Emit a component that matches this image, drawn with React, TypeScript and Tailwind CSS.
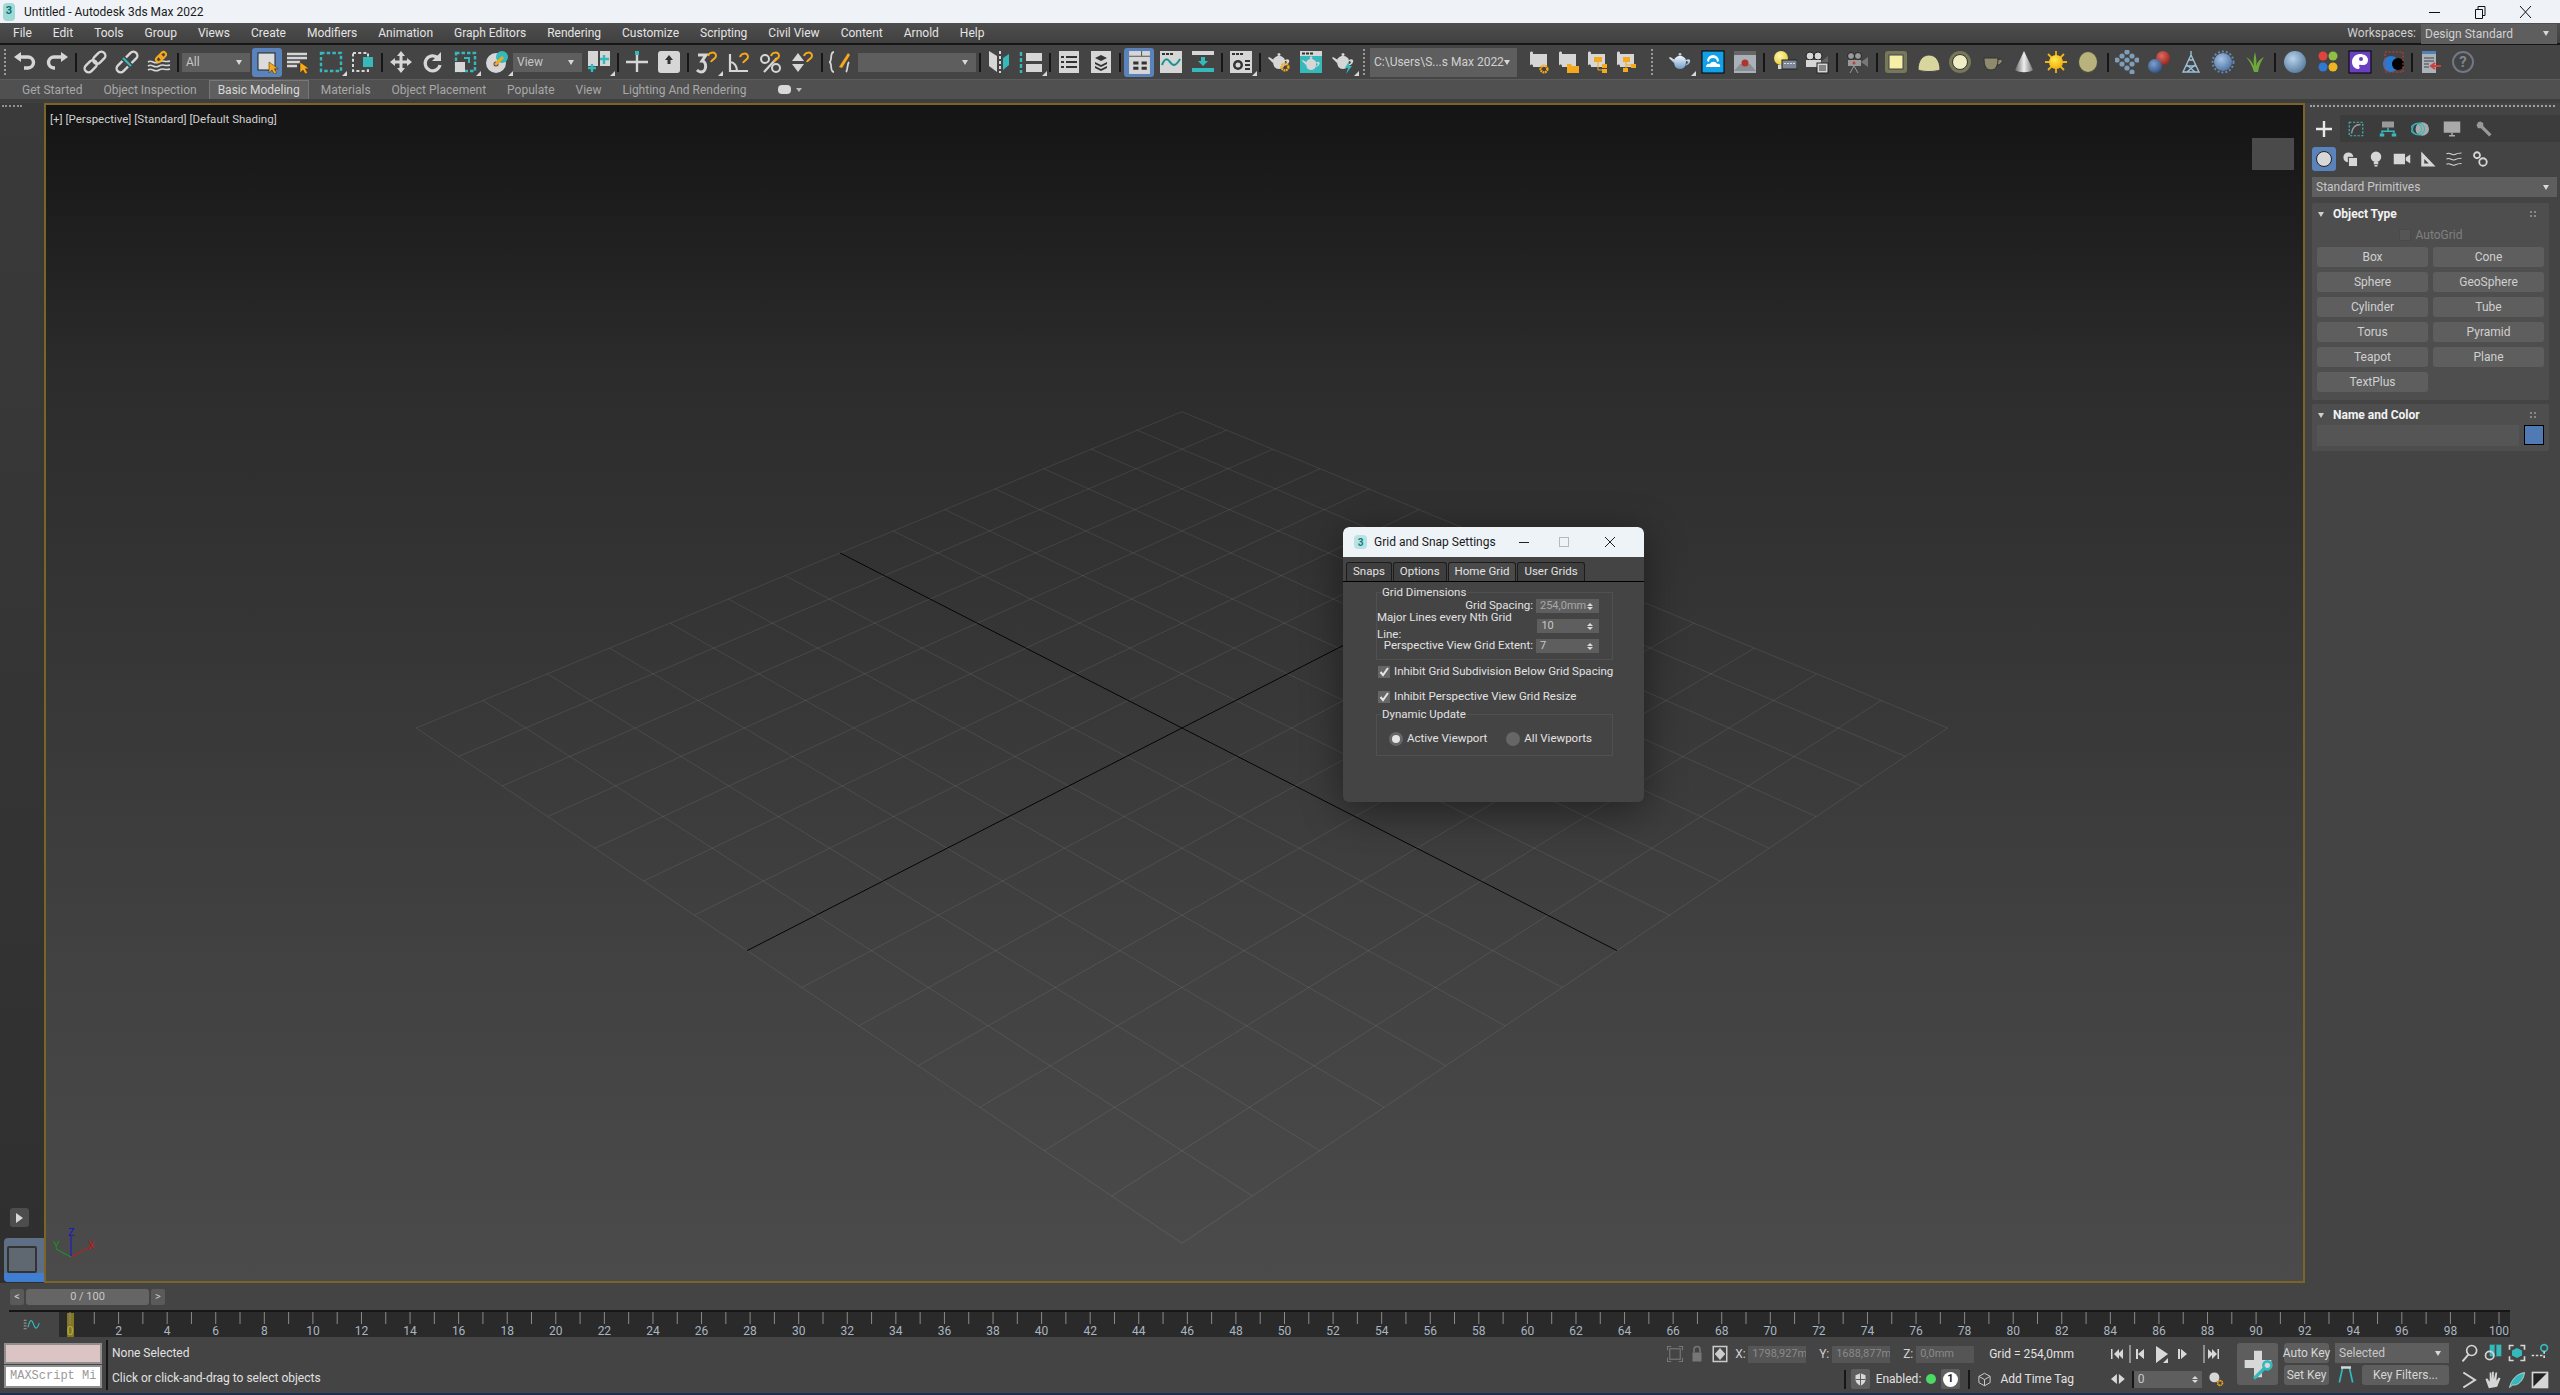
import type { ReactNode } from 'react';

const G = '#d6d6d6';
const T = '#35b9bb';
const A = '#f6a91b';

const menus = ['File', 'Edit', 'Tools', 'Group', 'Views', 'Create', 'Modifiers', 'Animation', 'Graph Editors', 'Rendering', 'Customize', 'Scripting', 'Civil View', 'Content', 'Arnold', 'Help'];
const primitives = ['Box', 'Cone', 'Sphere', 'GeoSphere', 'Cylinder', 'Tube', 'Torus', 'Pyramid', 'Teapot', 'Plane', 'TextPlus'];

// perspective of the home grid, fitted on the corners in the screenshot
function project(u: number, v: number) {
    const a = u - v;
    const b = u + v;
    const w = 1 + 0.0171 * b;
    return { x: 1182 + (54.7 * a) / w, y: 728 - (28 * b) / w };
}

function gridLine(u1: number, v1: number, u2: number, v2: number) {
    const p = project(u1, v1);
    const q = project(u2, v2);
    return { x1: p.x, y1: p.y, x2: q.x, y2: q.y };
}

const steps = Array.from({ length: 15 }, (_, i) => i - 7);

function Ico({ children, size = 24 }: { children: ReactNode; size?: number }) {
    return (
        <svg width={size} height={size} viewBox="0 0 24 24" fill="none" className="block">
            {children}
        </svg>
    );
}

function Slot({ children, flyout, className = 'w-8' }: { children?: ReactNode; flyout?: boolean; className?: string }) {
    return (
        <div className={`relative h-[34px] shrink-0 flex items-center justify-center ${className}`}>
            {children}
            {flyout && <div className="absolute right-0 bottom-[3px] w-0 h-0 border-l-[5px] border-l-transparent border-b-[5px] border-b-[#d8d8d8]" />}
        </div>
    );
}

function Sep({ className = 'w-1.5' }: { className?: string }) {
    return (
        <div className={`h-[34px] shrink-0 flex items-center justify-center ${className}`}>
            <div className="w-0.5 h-[19px] bg-[#161616]" />
        </div>
    );
}

function Dots({ className = 'w-2.5' }: { className?: string }) {
    return (
        <div className={`h-[34px] shrink-0 flex items-center justify-center ${className}`}>
            <div className="h-[26px] border-l-2 border-dotted border-[#9a9a9a]" />
        </div>
    );
}

function Combo({ text, className }: { text: string; className: string }) {
    return (
        <div className={`shrink-0 flex items-center justify-between bg-[#5e5e5e] text-[#c6c6c6] text-[12px] pl-1 pr-2 ${className}`}>
            <span className="whitespace-nowrap">{text}</span>
            <span className="w-0 h-0 border-x-[3px] border-x-transparent border-t-[5px] border-t-[#d8d8d8]" />
        </div>
    );
}

function Cursor() {
    return <path d="M14 12v11l3-3 2.200 4 2.400-1.200-2.200-4h4z" fill={A} stroke="#3a2a00" strokeWidth=".5" />;
}

function Ball({ id, c1, c2, r = 9, cx = 12, cy = 12 }: { id: string; c1: string; c2: string; r?: number; cx?: number; cy?: number }) {
    return (
        <>
            <defs>
                <radialGradient id={id} cx=".4" cy=".35" r=".75">
                    <stop offset="0" stopColor={c1} />
                    <stop offset="1" stopColor={c2} />
                </radialGradient>
            </defs>
            <circle cx={cx} cy={cy} r={r} fill={`url(#${id})`} />
        </>
    );
}

function Chain() {
    return (
        <g stroke={G} strokeWidth="2.400" transform="rotate(-45 12 12)">
            <rect x="-1" y="8" width="14" height="8" rx="4" />
            <rect x="11" y="8" width="14" height="8" rx="4" />
        </g>
    );
}

function Teapot({ color = G }: { color?: string }) {
    return (
        <g fill={color}>
            <path d="M6 11c0-3 3-5 6-5s6 2 6 5c0 5-2 8-6 8s-6-3-6-8z" />
            <path d="M6 13L1 8l1-1 5 3zM18 10c3-2 5 0 4 2-1 3-3 3-5 4l1-2c2 0 3-3 0-3z" />
            <circle cx="12" cy="4.500" r="1.500" />
        </g>
    );
}

function Gear({ x, y }: { x: number; y: number }) {
    return <circle cx={x} cy={y} r="3.400" fill="none" stroke={A} strokeWidth="2.400" strokeDasharray="1.800 .6" />;
}

function Scroll({ children }: { children?: ReactNode }) {
    return (
        <Ico>
            <path d="M3 3c0-2 3-2 3 0v13c0-2-3-2-3 0z" fill={G} />
            <rect x="6" y="4" width="14" height="13" fill={G} />
            {children}
        </Ico>
    );
}

function MainToolbar() {
    return (
        <div className="h-[34px] shrink-0 bg-[#444] flex items-center">
            <Dots className="w-[9px]" />
            <Slot><Ico><path d="M6 7h9a5 5 0 0 1 0 11h-4" stroke={G} strokeWidth="3.400" /><path d="M1 7l7-5v10z" fill={G} /></Ico></Slot>
            <Slot><Ico><path d="M18 7H9a5 5 0 0 0 0 11h1" stroke={G} strokeWidth="3.400" /><path d="M23 7l-7-5v10z" fill={G} /></Ico></Slot>
            <Sep />
            <Slot><Ico><Chain /></Ico></Slot>
            <Slot><Ico><Chain /><path d="M7 7l10 10" stroke="#444" strokeWidth="5" /><path d="M8 8l8 8" stroke={T} strokeWidth="2.200" /></Ico></Slot>
            <Slot><Ico><path d="M1 12c4-3 6 3 11 0s5 1 11-1M1 16c4-3 6 3 11 0s5 1 11-1M1 20c4-3 6 3 11 0s5 1 11-1" stroke={G} strokeWidth="1.600" /><g stroke={A} strokeWidth="2" transform="rotate(-45 14 7)"><rect x="8" y="4.500" width="7" height="5" rx="2.500" /><rect x="13" y="4.500" width="7" height="5" rx="2.500" /></g></Ico></Slot>
            <Sep />
            <Combo text="All" className="ml-px w-[68px] h-[19px]" />
            <div className="ml-0.5 w-[30px] h-[29px] shrink-0 rounded-[3px] bg-[#5a82bb] flex items-center justify-center">
                <Ico><rect x="3" y="3" width="17" height="17" fill="#dcdcdc" stroke="#222" strokeWidth="1" /><Cursor /></Ico>
            </div>
            <Slot className="w-8"><Ico><path d="M1 4h20M1 8h20M1 12h13M1 16h10" stroke={G} strokeWidth="2.400" /><Cursor /></Ico></Slot>
            <Slot className="ml-px w-8" flyout><Ico><rect x="2" y="3" width="20" height="18" stroke={T} strokeWidth="2.400" strokeDasharray="3.500 2.200" /></Ico></Slot>
            <Slot><Ico><rect x="2" y="3" width="15" height="18" stroke={G} strokeWidth="2" strokeDasharray="3 2.200" /><rect x="12" y="7" width="10" height="10" fill={T} /></Ico></Slot>
            <Sep />
            <Slot><Ico><path d="M12 1l4 5h-2.500v4.500H18V8l5 4-5 4v-2.500h-4.500V18H16l-4 5-4-5h2.500v-4.500H6V16l-5-4 5-4v2.500h4.500V6H8z" fill={G} /></Ico></Slot>
            <Slot><Ico><path d="M17 8a7.500 7.500 0 1 0 2 7" stroke={G} strokeWidth="3.200" /><path d="M20 2v9h-9z" fill={G} /></Ico></Slot>
            <Slot flyout><Ico><rect x="3" y="3" width="19" height="18" stroke={T} strokeWidth="2.400" strokeDasharray="3.500 2" /><rect x="2" y="12" width="10" height="10" fill={G} /><path d="M11 8h5v5" stroke={T} strokeWidth="2" /></Ico></Slot>
            <Slot flyout><Ico><circle cx="11" cy="13" r="10" fill={G} /><circle cx="17" cy="7" r="6" fill={T} /><circle cx="11" cy="14" r="2.500" fill="#444" /><path d="M10 15l8-8" stroke={A} strokeWidth="3" /></Ico></Slot>
            <Combo text="View" className="w-[69px] h-[19px]" />
            <Slot className="ml-px w-8" flyout><Ico><rect x="1" y="1" width="10" height="15" fill={G} /><rect x="13" y="1" width="10" height="15" fill={G} /><path d="M5 14v8M1 18h8" stroke={T} strokeWidth="2.400" /><path d="M17 5v9M13 9h9" stroke={T} strokeWidth="2.400" /></Ico></Slot>
            <Sep />
            <Slot><Ico><rect x="10" y="1" width="4" height="4" fill={T} /><path d="M12 5v17M1 12h22" stroke={G} strokeWidth="2.400" /></Ico></Slot>
            <Slot><Ico><rect x="1" y="1" width="22" height="22" rx="3" fill={G} /><path d="M12 5l4 5h-2.500v4h-3v-4H8z" fill="#333" /></Ico></Slot>
            <Sep />
            <Slot flyout><Ico><path d="M3 5h8l-4 6c5 0 5 11-1 11-2 0-3-1-4-2" stroke={G} strokeWidth="3" /><path d="M13 6c1-4 8-5 8 0 0 3-4 3-5 6" stroke={A} strokeWidth="2" /></Ico></Slot>
            <Slot><Ico><path d="M3 4v17h18M3 12c4 0 7 4 7 9" stroke={G} strokeWidth="2.200" /><path d="M13 7c1-4 8-5 8 0 0 3-4 3-5 6" stroke={A} strokeWidth="2" /></Ico></Slot>
            <Slot><Ico><path d="M18 8L5 22" stroke={G} strokeWidth="2.200" /><circle cx="6" cy="9" r="4" stroke={G} strokeWidth="2" /><circle cx="17" cy="18" r="4" stroke={G} strokeWidth="2" /><path d="M12 6c1-4 8-5 8 0 0 3-4 3-5 6" stroke={A} strokeWidth="2" /></Ico></Slot>
            <Slot><Ico><path d="M7 3l6 8H1zM1 14h12l-6 8z" fill={G} /><path d="M13 6c1-4 8-5 8 0 0 3-4 3-5 6" stroke={A} strokeWidth="2" /></Ico></Slot>
            <Sep />
            <Slot className="w-[30px]"><Ico><path d="M6 2C1 2 5 12 1 12c4 0 0 10 5 10M18 22c2-2 1-8 3-10" stroke={G} strokeWidth="1.800" /><path d="M11 17l9-14 2 2-8 13z" fill={A} /></Ico></Slot>
            <Combo text="" className="ml-[3px] w-[118px] h-[19px]" />
            <Sep className="w-2" />
            <Slot className="-ml-px w-8"><Ico><path d="M2 1l8 5v16l-8-6z" fill={G} /><path d="M22 4l-6 4v12l6-5z" fill={T} /><path d="M13 1v22" stroke={G} strokeWidth="2" strokeDasharray="3 2" /></Ico></Slot>
            <Slot flyout><Ico><path d="M2 2v21" stroke={T} strokeWidth="2.400" strokeDasharray="4 2" /><rect x="7" y="3" width="16" height="8" fill={G} /><rect x="7" y="14" width="16" height="8" fill={G} /></Ico></Slot>
            <Sep />
            <Slot><Ico><rect x="2" y="1" width="20" height="22" fill={G} /><path d="M4 6h3v2H4zM9 6h11v2H9zM4 11h3v2H4zM9 11h11v2H9zM4 16h3v2H4zM9 16h11v2H9z" fill="#333" /></Ico></Slot>
            <Slot><Ico><rect x="2" y="1" width="20" height="22" fill={G} /><path d="M12 5l6 3-6 3-6-3zM6 12l6 3 6-3v2l-6 3-6-3zM6 16l6 3 6-3v2l-6 3-6-3z" fill="#333" /></Ico></Slot>
            <Sep />
            <Slot>
                <div className="w-[30px] h-[29px] rounded-[3px] bg-[#5a82bb] flex items-center justify-center">
                    <Ico size={25}><rect x="2" y="1" width="20" height="22" fill={G} /><path d="M14 1v5h8M2 6h12" stroke="#555" /><path d="M6 11h5v3H6zM14 11h5v3h-5zM6 16h5v3H6zM14 16h5v3h-5z" fill="#333" /></Ico>
                </div>
            </Slot>
            <Slot><Ico><rect x="1" y="1" width="22" height="22" fill={G} /><path d="M3 3h3v2H3zM7 3h3v2H7zM11 3h3v2h-3z" fill="#333" /><path d="M3 15c3-8 6-6 8-3s5 6 10-3" stroke={T} strokeWidth="2.400" /><path d="M3 15c3-8 6-6 8-3s5 6 10-3" stroke="#333" strokeWidth=".6" /></Ico></Slot>
            <Slot><Ico><rect x="1" y="1" width="22" height="4" fill={G} /><rect x="1" y="18" width="22" height="4" fill={T} /><path d="M10 7h4v4h3l-5 5-5-5h3z" fill={T} /></Ico></Slot>
            <Sep />
            <Slot flyout><Ico><rect x="1" y="1" width="22" height="22" fill={G} /><path d="M3 3h3v2H3zM7 3h3v2H7zM11 3h3v2h-3zM16 10h5v2h-5zM16 14h5v2h-5zM16 18h5v2h-5z" fill="#333" /><circle cx="9" cy="15" r="5" fill="#333" /><circle cx="9" cy="15" r="2.500" fill={G} /></Ico></Slot>
            <Sep />
            <Slot><Ico><Teapot /><Gear x={18} y={17} /></Ico></Slot>
            <Slot><Ico><rect x="1" y="1" width="22" height="22" fill={T} /><rect x="1" y="1" width="22" height="5" fill={G} /><path d="M3 2.500h3v2H3zM7 2.500h3v2H7zM11 2.500h3v2h-3z" fill="#333" /><g transform="translate(2 4) scale(.84)"><Teapot /></g></Ico></Slot>
            <Slot flyout><Ico><Teapot /><path d="M18 11l-4 7h3l-2 6 6-8h-3z" fill={T} /></Ico></Slot>
            <Dots />
            <Combo text="C:\Users\S...s Max 2022" className="ml-px w-[147px] h-[29px] text-[#d0d0d0]" />
            <Slot className="ml-[7px] w-[29px]"><Scroll><Gear x={17} y={19} /></Scroll></Slot>
            <Slot className="w-[29px]"><Scroll><path d="M11 14h4l1 2h7v7H11z" fill={A} /></Scroll></Slot>
            <Slot className="w-[29px]"><Scroll><path d="M9 7h8v5H9zM17 14h5v4h-5zM17 19h5v4h-5z" fill={A} /><path d="M13 12v8h4" stroke={A} /></Scroll></Slot>
            <Slot className="w-[29px]"><Scroll><path d="M9 7h7v5H9zM9 18h5v4H9zM17 14h5v4h-5z" fill={A} /><path d="M12 12v6M12 15h5" stroke={A} /></Scroll></Slot>
            <Dots className="w-[24px]" />
            <Slot flyout><Ico><defs><linearGradient id="pot" x1="0" y1="0" x2="0" y2="1"><stop offset="0" stopColor="#f2f6fb" /><stop offset="1" stopColor="#6f9cc8" /></linearGradient></defs><Teapot color="url(#pot)" /></Ico></Slot>
            <Slot className="ml-px w-8"><Ico><rect x="1" y="1" width="22" height="22" fill="#12a1e8" stroke="#000" /><path d="M6 11a6 6 0 0 1 12 0l-2 1a4 4 0 0 0-8 0z" fill="#fff" /><path d="M5 17c0-3 3-4 4-3 1-3 6-3 7 0 2-1 4 1 3 3z" fill="#fff" /></Ico></Slot>
            <Slot><Ico><rect x="1" y="1" width="22" height="22" fill="#a9b0b8" /><rect x="1" y="1" width="22" height="4" fill="#666" /><path d="M1 21l6-7h10l6 7z" fill="#8b8f94" /><circle cx="12" cy="13" r="3.500" fill="#b0332c" /></Ico></Slot>
            <Sep />
            <div className="w-0.5 shrink-0" />
            <Slot><Ico><Ball id="bulb" c1="#fff7b0" c2="#e6c528" r={7} cx={8} cy={8} /><rect x="5" y="15" width="6" height="4" fill={G} /><rect x="9" y="10" width="15" height="9" fill="#7d8795" stroke="#222" /><path d="M11 13h2v1h-2zM14 13h2v1h-2zM17 13h2v1h-2zM20 13h2v1h-2z" fill="#ddd" /></Ico></Slot>
            <Slot><Ico><circle cx="5" cy="6" r="4" fill={G} stroke="#222" /><circle cx="13" cy="6" r="4" fill={G} stroke="#222" /><rect x="1" y="10" width="15" height="7" fill={G} /><path d="M16 12l7-6v11z" fill="#666" /><rect x="12" y="13" width="11" height="10" fill={G} stroke="#222" /><path d="M14 16h7M14 18h7M14 20h7" stroke="#333" /></Ico></Slot>
            <Sep className="w-2" />
            <Slot><Ico><circle cx="6" cy="6" r="3.500" fill="#999" stroke="#222" /><circle cx="13" cy="6" r="3.500" fill="#999" stroke="#222" /><rect x="3" y="10" width="13" height="6" fill="#999" /><circle cx="9" cy="13" r="1.500" fill="#c04036" /><path d="M16 12l7-5v10z" fill="#777" /><path d="M9 16l-4 7M9 16l4 7" stroke="#999" /></Ico></Slot>
            <Sep className="w-2" />
            <Slot className="-ml-px w-8"><Ico><rect x="1" y="1" width="22" height="22" rx="3" fill="#77775a" /><rect x="5" y="5" width="14" height="14" fill="#f5efa8" stroke="#444" /></Ico></Slot>
            <Slot className="ml-px w-8"><Ico><path d="M1 20c0-10 5-15 11-15s11 5 11 15c-6 2-16 2-22 0z" fill="#d9d59f" stroke="#444" /></Ico></Slot>
            <Slot className="-ml-px w-8"><Ico><circle cx="12" cy="12" r="11" fill="#77775a" /><circle cx="12" cy="12" r="7.500" fill="#f0edc4" stroke="#333" /></Ico></Slot>
            <Slot><Ico><path d="M4 8h14c0 8-2 12-7 12S4 16 4 8zM18 10c3-2 5 0 4 2-1 2-3 3-5 3" fill="#8d8a70" stroke="#333" /></Ico></Slot>
            <Slot><Ico><defs><linearGradient id="cone" x1="0" y1="0" x2="1" y2="0"><stop offset="0" stopColor="#666" /><stop offset=".5" stopColor="#eee" /><stop offset="1" stopColor="#777" /></linearGradient></defs><path d="M12 1l9 19c-4 3-14 3-18 0z" fill="url(#cone)" /></Ico></Slot>
            <Slot><Ico><path d="M12 1v22M1 12h22M4 4l16 16M20 4L4 20" stroke="#f0b416" strokeWidth="1.800" /><Ball id="sun" c1="#ffe94a" c2="#f0a808" r={7} /></Ico></Slot>
            <Slot><Ico><ellipse cx="12" cy="12" rx="10" ry="11" fill="#4f4d3a" /><ellipse cx="12" cy="12" rx="9" ry="10" fill="#b8b27c" /></Ico></Slot>
            <Sep className="w-2" />
            <Slot className="-ml-px w-8"><Ico><g fill="#7f9db8">{[[12, 2], [7, 6], [17, 6], [2, 10], [12, 10], [22, 10], [7, 14], [17, 14], [12, 18], [17, 22]].map(([x, y]) => <circle key={`${x}-${y}`} cx={x} cy={y} r="2.600" />)}</g></Ico></Slot>
            <Slot><Ico><Ball id="m1" c1="#e06a60" c2="#8e2018" r={7} cx={16} cy={8} /><Ball id="m2" c1="#7ea0cc" c2="#2a4a7e" r={7} cx={8} cy={16} /></Ico></Slot>
            <Slot><Ico><path d="M12 1v5M12 5L4 22h16zM7 16l10 0M9 10h6M8 15l8 7M16 15L8 22" stroke="#9cc0d8" strokeWidth="1.400" /></Ico></Slot>
            <Slot><Ico><Ball id="rock" c1="#a7c4e4" c2="#456c9c" r={9} /><circle cx="12" cy="12" r="10.500" stroke="#6488b0" strokeWidth="2" strokeDasharray="2 2" /></Ico></Slot>
            <Slot><Ico><path d="M11 22C9 15 6 10 3 7c4 2 6 5 8 9-1-5 0-10 1-14 1 5 2 9 1 14 1-4 4-7 8-9-3 4-5 9-6 15z" fill="#6fa83a" /></Ico></Slot>
            <Sep className="w-2" />
            <Slot><Ico><Ball id="mat" c1="#b9d3ea" c2="#4d7397" r={11} /></Ico></Slot>
            <Slot className="ml-px w-8"><Ico><circle cx="7" cy="6" r="4.500" fill="#e0443c" /><circle cx="17" cy="6" r="4.500" fill="#8fbf45" /><circle cx="7" cy="17" r="4.500" fill="#2f7ad0" /><circle cx="17" cy="17" r="4.500" fill="#f0b422" /></Ico></Slot>
            <Slot><Ico><rect x="1" y="1" width="22" height="22" fill="#6a3fc0" stroke="#000" /><path d="M12 4c-5 0-8 4-8 8s3 7 6 7c2 0 2-2 1-3 0-2 2-1 4-1 3 0 5-2 5-5 0-4-4-6-8-6z" fill="#fff" /><circle cx="13" cy="9" r="2" fill="#6a3fc0" /></Ico></Slot>
            <Slot className="ml-px w-8"><Ico><circle cx="10" cy="14" r="8" fill="#2a78d0" /><circle cx="17" cy="14" r="6" fill="#000" /><rect x="4" y="2" width="18" height="20" stroke="#d03a32" strokeDasharray="2 1.600" /></Ico></Slot>
            <Sep />
            <Slot className="w-8"><Ico><rect x="3" y="1" width="14" height="22" fill="#aab2bb" /><rect x="3" y="1" width="14" height="3" fill="#5580b5" /><path d="M5 8h10M5 11h10M5 14h5M5 17h5" stroke="#444" /><path d="M22 16H13M16 13l-4 3 4 3" stroke="#d04038" strokeWidth="2" /></Ico></Slot>
            <Slot><div className="w-[22px] h-[22px] rounded-full border-2 border-[#6f7884] text-[#7d8794] text-[15px] font-bold flex items-center justify-center">?</div></Slot>
        </div>
    );
}

function Viewport() {
    return (
        <div className="relative flex-1 min-w-0 border-2 border-[#7a6428] bg-[linear-gradient(to_bottom,#141414_0%,#2c2c2c_23%,#424242_74%,#4b4b4b_100%)] overflow-hidden">
            <svg viewBox="46 105 2257 1176" className="absolute inset-0 w-full h-full">
                <g stroke="#ffffff" strokeOpacity=".085" strokeWidth="1">
                    {steps.map(i => <line key={`u${i}`} {...gridLine(i, -7, i, 7)} />)}
                    {steps.map(i => <line key={`v${i}`} {...gridLine(-7, i, 7, i)} />)}
                </g>
                <g stroke="#000000" strokeWidth="1">
                    <line {...gridLine(-7, 0, 7, 0)} />
                    <line {...gridLine(0, -7, 0, 7)} />
                </g>
                <path d="M71 1257V1236" stroke="#1414d8" />
                <path d="M71 1257L90 1247" stroke="#d01818" />
                <path d="M71 1257L56 1249" stroke="#18a018" />
                <text x="68" y="1236" fontSize="11" fill="#1414c8" fontFamily="Roboto, sans-serif">Z</text>
                <text x="88" y="1249" fontSize="11" fill="#c01818" fontFamily="Roboto, sans-serif">X</text>
                <text x="53" y="1249" fontSize="11" fill="#189018" fontFamily="Roboto, sans-serif">Y</text>
            </svg>
            <div className="absolute left-1 top-[7px] text-[11.500px] leading-[14px] text-[#cfcfcf] whitespace-nowrap">[+] [Perspective] [Standard] [Default Shading]</div>
            <div className="absolute right-[9px] top-[33px] w-[42px] h-[32px] bg-[#4a4a4a]" />
            <GridDialog />
        </div>
    );
}

function Spinner({ value, muted }: { value: string; muted?: boolean }) {
    return (
        <div className={`w-[63px] h-[14px] ml-[3px] bg-[#5e5e5e] flex items-center justify-between pl-1 pr-1.5 text-[11px] ${muted ? 'text-[#a8a8a8]' : 'text-[#c8c8c8]'}`}>
            <span>{value}</span>
            <Arrows />
        </div>
    );
}

function Arrows() {
    return (
        <span className="flex flex-col gap-px">
            <span className="w-0 h-0 border-x-[3px] border-x-transparent border-b-[3px] border-b-[#d8d8d8]" />
            <span className="w-0 h-0 border-x-[3px] border-x-transparent border-t-[3px] border-t-[#d8d8d8]" />
        </span>
    );
}

function Check({ label }: { label: string }) {
    return (
        <div className="flex items-center gap-1 h-[14px]">
            <div className="w-3 h-3 bg-[#666] flex items-center justify-center">
                <svg width="10" height="10" viewBox="0 0 10 10" fill="none"><path d="M1.500 5l2.500 3 5-7" stroke="#e4e4e4" strokeWidth="2" /></svg>
            </div>
            <span>{label}</span>
        </div>
    );
}

function GridDialog() {
    const tabs = ['Snaps', 'Options', 'Home Grid', 'User Grids'];
    return (
        <div className="absolute left-[1297px] top-[422px] w-[301px] h-[275px] rounded-[6px] bg-[#444] text-[11.500px] text-[#e2e2e2] shadow-[0_8px_40px_rgba(0,0,0,0.45)] overflow-hidden">
            <div className="h-[30px] bg-[#eef3f8] rounded-t-[6px] flex items-center text-[#1a1a1a] text-[12px]">
                <div className="ml-[11px] w-[13px] h-[14px] rounded-sm bg-[#b9e3e0] flex items-center justify-center text-[#0d7f86] text-[10px] font-bold">3</div>
                <span className="ml-[7px] w-[141px] whitespace-nowrap">Grid and Snap Settings</span>
                <svg width="120" height="14" viewBox="0 0 120 14" fill="none">
                    <path d="M4 7.500h10" stroke="#222" />
                    <rect x="44.500" y="2.500" width="9" height="9" stroke="#b5b9bd" />
                    <path d="M90 2l10 10M100 2L90 12" stroke="#222" />
                </svg>
            </div>
            <div className="h-[22px] mt-[3px] pl-[3px] flex items-end gap-px border-b border-black">
                {tabs.map(t => (
                    <div key={t} className={`h-[19px] px-[6px] flex items-center rounded-t-[3px] border border-b-0 border-[#1c1c1c] ${t === 'Home Grid' ? 'bg-[#4a4a4a]' : 'bg-[#3e3e3e]'}`}>{t}</div>
                ))}
            </div>
            <div className="relative ml-[33px] mt-[10px] w-[237px] h-[68px] border border-[#505050] pt-[6px] pr-[13px]">
                <div className="absolute left-1 -top-[8px] px-px bg-[#444] leading-[14px]">Grid Dimensions</div>
                <div className="flex items-center justify-end h-[14px]">Grid Spacing:<Spinner value="254,0mm" muted /></div>
                <div className="flex items-center justify-end h-[14px] mt-1.5">Major Lines every Nth Grid Line:<Spinner value="10" /></div>
                <div className="flex items-center justify-end h-[14px] mt-1.5">Perspective View Grid Extent:<Spinner value="7" /></div>
            </div>
            <div className="ml-[35px] mt-[5px] flex flex-col gap-[11px]">
                <Check label="Inhibit Grid Subdivision Below Grid Spacing" />
                <Check label="Inhibit Perspective View Grid Resize" />
            </div>
            <div className="relative ml-[33px] mt-[10px] w-[237px] h-[42px] border border-[#505050] flex items-center pl-3 pt-2">
                <div className="absolute left-1 -top-[8px] px-px bg-[#444] leading-[14px]">Dynamic Update</div>
                <div className="w-[14px] h-[14px] rounded-full bg-[#666] flex items-center justify-center"><div className="w-2 h-2 rounded-full bg-[#e4e4e4]" /></div>
                <span className="ml-1">Active Viewport</span>
                <div className="ml-[19px] w-[14px] h-[14px] rounded-full bg-[#666]" />
                <span className="ml-1">All Viewports</span>
            </div>
        </div>
    );
}

function CommandPanel() {
    return (
        <div className="w-[255px] shrink-0 bg-[#444] text-[#d6d6d6] text-[12px]">
            <div className="mx-[5px] mt-0.5 h-[2px] border-t-2 border-dotted border-[#a0a0a0]" />
            <div className="mt-2 ml-[3px] h-[27px] flex bg-[#3c3c3c]">
                <div className="w-8 bg-[#444] flex items-center justify-center"><svg width="18" height="18" viewBox="0 0 18 18"><path d="M9 1v16M1 9h16" stroke="#e8e8e8" strokeWidth="2.400" /></svg></div>
                <div className="w-8 flex items-center justify-center"><Ico size={18}><rect x="3" y="3" width="18" height="18" stroke={T} strokeDasharray="3 2" strokeWidth="1.600" /><path d="M6 18C7 10 12 6 18 6" stroke="#999" strokeWidth="2" /></Ico></div>
                <div className="w-8 flex items-center justify-center"><Ico size={18}><rect x="4" y="2" width="16" height="8" fill="#999" /><path d="M12 10v5M4 18v-3h16v3" stroke={T} strokeWidth="2" /><rect x="1" y="18" width="6" height="4" fill={T} /><rect x="17" y="18" width="6" height="4" fill={T} /></Ico></div>
                <div className="w-8 flex items-center justify-center"><Ico size={18}><circle cx="15" cy="12" r="9" fill="#aaa" /><circle cx="10" cy="12" r="8" stroke={T} strokeWidth="1.400" /><circle cx="7" cy="12" r="7" stroke={T} strokeWidth="1.400" /></Ico></div>
                <div className="w-8 flex items-center justify-center"><Ico size={18}><rect x="1" y="2" width="22" height="15" fill="#aaa" /><path d="M8 21h8M12 17v4" stroke="#aaa" strokeWidth="2" /></Ico></div>
                <div className="w-8 flex items-center justify-center"><Ico size={18}><path d="M4 3l3-1 4 2v4l11 11-3 3L8 11H4L2 7z" fill="#999" /></Ico></div>
            </div>
            <div className="mt-[5px] ml-[7px] h-6 flex items-center gap-0.5">
                <div className="w-6 h-6 rounded-[3px] bg-[#5a82bb] flex items-center justify-center"><div className="w-4 h-4 rounded-full bg-[#d8d8d8] border border-[#222]" /></div>
                <div className="w-6 flex justify-center"><Ico size={17}><circle cx="9" cy="9" r="7" fill={G} /><rect x="9" y="9" width="13" height="13" fill={G} stroke="#444" strokeWidth="1.500" /></Ico></div>
                <div className="w-6 flex justify-center"><Ico size={18}><circle cx="12" cy="9" r="7" fill={G} /><path d="M9 16h6v3H9zM10 20h4v2h-4z" fill={G} /></Ico></div>
                <div className="w-6 flex justify-center"><Ico size={18}><rect x="1" y="5" width="15" height="14" fill={G} /><path d="M17 10l6-4v12l-6-4z" fill={G} /></Ico></div>
                <div className="w-6 flex justify-center"><Ico size={18}><path d="M3 2l19 20H3zM7 12v6h6z" fill={G} fillRule="evenodd" /></Ico></div>
                <div className="w-6 flex justify-center"><Ico size={18}><path d="M2 5c5-3 7 3 11 1s5-2 9-2M2 12c5-3 7 3 11 1s5-2 9-2M2 19c5-3 7 3 11 1s5-2 9-2" stroke={G} strokeWidth="1.500" /></Ico></div>
                <div className="w-6 flex justify-center"><Ico size={18}><circle cx="8" cy="7" r="4" stroke={G} strokeWidth="2.400" /><circle cx="16" cy="16" r="5" stroke={G} strokeWidth="2.400" /></Ico></div>
            </div>
            <div className="mt-1.5 ml-[7px] mr-[3px] h-5 bg-[#5e5e5e] flex items-center justify-between pl-1 pr-2 text-[#c8c8c8]">
                <span>Standard Primitives</span>
                <span className="w-0 h-0 border-x-[3px] border-x-transparent border-t-[5px] border-t-[#d8d8d8]" />
            </div>
            <div className="mt-1.5 ml-[7px] w-[237px] h-[197px] bg-[#4e4e4e] rounded-[2px] px-[5px]">
                <RolloutHead title="Object Type" />
                <div className="mt-[4px] h-[15px] flex items-center justify-center text-[#808080]">
                    <div className="w-3 h-3 mr-[5px] bg-[#555] border border-[#4a4a4a]" />AutoGrid
                </div>
                <div className="mt-[5px] grid grid-cols-2 gap-x-[5px] gap-y-[5px]">
                    {primitives.map(p => (
                        <div key={p} className="h-5 bg-[#5e5e5e] rounded-[3px] flex items-center justify-center text-[#d0d0d0]">{p}</div>
                    ))}
                </div>
            </div>
            <div className="mt-1 ml-[7px] w-[237px] h-[47px] bg-[#4e4e4e] rounded-[2px] px-[5px]">
                <RolloutHead title="Name and Color" />
                <div className="mt-px flex gap-[5px]">
                    <div className="w-[202px] h-[21px] bg-[#555]" />
                    <div className="w-5 h-5 bg-[#4f7ab3] border border-black" />
                </div>
            </div>
        </div>
    );
}

function RolloutHead({ title }: { title: string }) {
    return (
        <div className="h-5 flex items-center font-bold text-[#f2f2f2] pt-0.5">
            <span className="w-0 h-0 ml-[1px] mr-[9px] border-x-[3px] border-x-transparent border-t-[5px] border-t-[#cfcfcf]" />
            <span className="flex-1">{title}</span>
            <span className="w-[6px] h-[6px] mr-2 border-t-2 border-b-2 border-dotted border-[#888]" />
        </div>
    );
}

function Timeline() {
    const frames = Array.from({ length: 101 }, (_, i) => i);
    const px = (f: number) => 11 + f * 24.29;
    return (
        <svg width="2451" height="25" viewBox="0 0 2451 25" className="block shrink-0">
            <rect width="2451" height="25" fill="#2a2a2a" />
            <rect x="8" y="1" width="7" height="24" fill="#85771f" />
            {frames.map(f => <line key={f} x1={px(f)} x2={px(f)} y1="0" y2="12" stroke="#8a8a8a" />)}
            {frames.filter(f => f % 2 === 0).map(f => (
                <text key={f} x={px(f)} y="23" textAnchor="middle" fontSize="12" fontFamily="Roboto, sans-serif" fill={f === 0 ? '#b8ad50' : '#a9b6c2'}>{f}</text>
            ))}
        </svg>
    );
}

function Field({ label, value }: { label: string; value: string }) {
    return (
        <div className="flex items-center gap-1 text-[#d0d0d0]">
            <span className="w-[9px] text-right">{label}</span>
            <div className="w-[58px] h-[17px] bg-[#555] text-[#8a8a8a] text-[11px] pl-1 flex items-center overflow-hidden whitespace-nowrap">{value}</div>
        </div>
    );
}

function SmallBtn({ children, className }: { children: ReactNode; className: string }) {
    return <div className={`bg-[#5e5e5e] rounded-[3px] flex items-center justify-center text-[#d6d6d6] whitespace-nowrap ${className}`}>{children}</div>;
}

function StatusArea() {
    return (
        <div className="flex-1 min-h-0 flex text-[12px] text-[#e2e2e2]">
            <div className="ml-1 mt-[7px] w-[98px] h-[45px] shrink-0 flex flex-col gap-px">
                <div className="h-[21px] bg-[#dcc4c4] border-2 border-[#8f8f8f]" />
                <div className="h-[23px] bg-white border-2 border-[#8f8f8f] font-['Liberation_Mono',monospace] text-[12px] leading-[19px] pl-1 text-[#9a9a9a] overflow-hidden whitespace-nowrap">MAXScript Mi</div>
            </div>
            <div className="ml-1 mt-1 h-[50px] w-[2px] bg-[#161616] shrink-0" />
            <div className="ml-1 mt-[10px] flex flex-col gap-[10px] leading-[15px]">
                <span>None Selected</span>
                <span>Click or click-and-drag to select objects</span>
            </div>
            <div className="flex-1" />
            <div className="w-[414px] shrink-0 pt-2 flex flex-col">
                <div className="h-5 flex items-center">
                    <div className="w-[24px] ml-1 flex justify-center"><Ico size={18}><rect x="5" y="5" width="14" height="14" stroke="#777" strokeWidth="1.500" /><path d="M2 7V2h5M17 2h5v5M22 17v5h-5M7 22H2v-5" stroke="#777" strokeWidth="1.500" /></Ico></div>
                    <div className="w-[26px] flex justify-center"><Ico size={18}><rect x="6" y="10" width="12" height="12" fill="#777" /><path d="M8 10V6a4 4 0 0 1 8 0v4" stroke="#777" strokeWidth="2" /></Ico></div>
                    <div className="w-[26px] flex justify-center"><Ico size={18}><rect x="3" y="2" width="18" height="20" stroke="#ccc" strokeWidth="2" /><path d="M12 4l7 8-7 8-7-8z" fill="#ccc" /></Ico></div>
                    <div className="ml-1 flex items-center gap-[13px]">
                        <Field label="X:" value="1798,927m" />
                        <Field label="Y:" value="1688,877m" />
                        <Field label="Z:" value="0,0mm" />
                    </div>
                    <span className="ml-[15px] whitespace-nowrap">Grid = 254,0mm</span>
                </div>
                <div className="mt-[5px] h-5 flex items-center">
                    <div className="ml-[184px] w-0.5 h-[19px] bg-[#161616]" />
                    <div className="ml-[5px] w-[19px] h-5 bg-[#5e5e5e] rounded-[2px] flex items-center justify-center"><Ico size={15}><path d="M12 2l8 3v7c0 5-4 8-8 10-4-2-8-5-8-10V5z" fill="#d8d8d8" /><path d="M12 2v20M4 12h16" stroke="#555" strokeWidth="1.500" /></Ico></div>
                    <span className="ml-1.5">Enabled:</span>
                    <div className="ml-[5px] w-[10px] h-[10px] rounded-full bg-[#4cd964]" />
                    <div className="ml-[5px] w-[19px] h-5 bg-[#5e5e5e] rounded-[2px] flex items-center justify-center"><div className="w-[15px] h-[15px] rounded-full bg-white text-[#222] text-[11px] font-bold flex items-center justify-center">1</div></div>
                    <div className="ml-2 w-0.5 h-[19px] bg-[#161616]" />
                    <div className="ml-1.5 w-[18px] flex justify-center"><Ico size={15}><path d="M12 2l9 5v10l-9 5-9-5V7zM3 7l9 5 9-5M12 12v10" stroke="#c8c8c8" strokeWidth="1.600" /></Ico></div>
                    <span className="ml-[7px] whitespace-nowrap">Add Time Tag</span>
                </div>
            </div>
            <div className="ml-[34px] w-[116px] shrink-0 pt-2 flex flex-col">
                <div className="h-5 flex items-center">
                    <svg width="116" height="20" viewBox="0 0 116 20" fill="#d8d8d8">
                        <path d="M3 5h1.500v10H3zM11 5v10L6 10zM15 5v10l-5-5zM21.500 1h1v18h-1zM36 5v10l-6-5zM28 5h2v10h-2zM48 2l12 8-12 9z" />
                        <path d="M70 5h2v10h-2zM73 5v10l6-5zM95.500 1h1v18h-1zM100 5v10l5-5zM104 5v10l5-5zM109.500 5h1.500v10h-1.500z" />
                        <path d="M60 19h-5l5-5z" />
                    </svg>
                </div>
                <div className="mt-[5px] h-5 flex items-center">
                    <svg width="20" height="14" viewBox="0 0 20 14" fill="#d8d8d8"><path d="M9 2v10L3 7zM11 2v10l6-5z" /></svg>
                    <div className="ml-1 w-0.5 h-[17px] bg-[#161616]" />
                    <div className="w-[69px] h-[17px] bg-[#5e5e5e] flex items-center justify-between pl-1 pr-1 text-[#c8c8c8]"><span>0</span><Arrows /></div>
                    <div className="ml-1.5 w-4"><Ico size={17}><circle cx="9" cy="9" r="7" fill={G} /><Gear x={17} y={17} /></Ico></div>
                </div>
            </div>
            <div className="ml-[13px] mt-[7px] w-[41px] h-[42px] shrink-0 bg-[#5e5e5e] rounded-[3px] flex items-center justify-center">
                <Ico size={32}><path d="M9 2h6v7h7v6h-7v7H9v-7H2V9h7z" fill="#d8d8d8" /><circle cx="19" cy="13" r="3" stroke={T} strokeWidth="2" /><path d="M17 15L9 23" stroke={T} strokeWidth="2.400" /></Ico>
            </div>
            <div className="ml-1.5 mt-[7px] w-[165px] shrink-0 flex flex-col gap-0.5">
                <div className="flex gap-1.5">
                    <SmallBtn className="w-[45px] h-5">Auto Key</SmallBtn>
                    <div className="w-[114px] h-5 bg-[#5e5e5e] flex items-center justify-between pl-1 pr-2 text-[#c8c8c8]">
                        <span>Selected</span>
                        <span className="w-0 h-0 border-x-[3px] border-x-transparent border-t-[5px] border-t-[#d8d8d8]" />
                    </div>
                </div>
                <div className="flex items-center">
                    <SmallBtn className="w-[45px] h-5">Set Key</SmallBtn>
                    <div className="w-[33px] flex justify-center"><Ico size={20}><path d="M8 3l-4 18M16 3l4 18" stroke={T} strokeWidth="2" /><path d="M6 3h12" stroke={G} strokeWidth="3" /></Ico></div>
                    <SmallBtn className="w-[87px] h-5">Key Filters...</SmallBtn>
                </div>
            </div>
            <div className="ml-[9px] mt-[7px] w-[94px] shrink-0 grid grid-cols-4 gap-y-[3px]">
                <div className="flex justify-center"><Ico size={20}><circle cx="14" cy="9" r="6" stroke={G} strokeWidth="2" /><path d="M10 14l-7 8" stroke={G} strokeWidth="2.400" /></Ico></div>
                <div className="flex justify-center"><Ico size={20}><rect x="8" y="2" width="14" height="14" fill={T} /><rect x="14" y="2" width="2" height="14" fill="#444" /><circle cx="8" cy="15" r="5" stroke={G} strokeWidth="2" /></Ico></div>
                <div className="flex justify-center"><Ico size={20}><path d="M3 8V3h5M16 3h5v5M21 16v5h-5M8 21H3v-5" stroke={G} strokeWidth="2" /><path d="M12 6l6 3v6l-6 3-6-3V9z" fill={T} /></Ico></div>
                <div className="flex justify-center"><Ico size={20}><circle cx="17" cy="6" r="4" stroke={T} strokeWidth="2" /><path d="M17 10v10M2 15h14" stroke={G} strokeWidth="2" strokeDasharray="3 2" /></Ico></div>
                <div className="flex justify-center"><Ico size={20}><path d="M4 3l14 9L4 21" stroke={G} strokeWidth="2.400" /></Ico></div>
                <div className="flex justify-center"><Ico size={20}><path d="M7 22L3 11l2-1 3 4V3h2v8l1-9h2v9l2-8h2l-1 10 3-4 2 1-4 10z" fill={G} /></Ico></div>
                <div className="flex justify-center"><Ico size={20}><path d="M3 21c2-8 7-16 18-18-1 10-8 16-14 15z" fill={T} stroke={G} /></Ico></div>
                <div className="flex justify-center"><Ico size={20}><rect x="3" y="3" width="18" height="18" fill="#222" stroke={G} strokeWidth="2" /><path d="M21 3v18H3z" fill={G} /></Ico></div>
            </div>
            <div className="w-2 shrink-0" />
        </div>
    );
}

export default function App() {
    const ribbon = ['Get Started', 'Object Inspection', 'Basic Modeling', 'Materials', 'Object Placement', 'Populate', 'View', 'Lighting And Rendering'];
    return (
        <div className="w-[2560px] h-[1395px] overflow-hidden flex flex-col bg-[#444] font-['Roboto',sans-serif] text-[12px] leading-normal">
            {/* window title */}
            <div className="h-[23px] shrink-0 bg-[#eff3f8] flex items-center text-[#1a1a1a]">
                <div className="ml-[3px] w-[12px] h-[18px] rounded-sm bg-[#9fd9d6] flex items-center justify-center text-[#0d6f76] text-[11px] font-bold">3</div>
                <span className="ml-[9px]">Untitled - Autodesk 3ds Max 2022</span>
                <div className="flex-1" />
                <svg width="112" height="16" viewBox="0 0 112 16" fill="none" className="mr-[19px]">
                    <path d="M0 8.500h11" stroke="#111" />
                    <path d="M46.500 5.500h7v9h-7zM49 5V2.500h7v9h-2" stroke="#111" />
                    <path d="M91 2l11 12M102 2L91 14" stroke="#111" />
                </svg>
            </div>
            {/* menu bar */}
            <div className="h-[22px] shrink-0 border-b-2 border-[#161616] bg-[linear-gradient(to_bottom,#4e4e4e,#404040)] flex items-center text-[#e4e4e4]">
                <div className="pl-[13px] flex gap-[21px] whitespace-nowrap">
                    {menus.map(m => <span key={m}>{m}</span>)}
                </div>
                <div className="flex-1" />
                <span className="text-[#d0d0d0]">Workspaces:</span>
                <div className="ml-[5px] mr-[3px] mt-px w-[136px] h-[20px] bg-[#5e5e5e] flex items-center justify-between pl-1 pr-2 text-[#d0d0d0]">
                    <span>Design Standard</span>
                    <span className="w-0 h-0 border-x-[3px] border-x-transparent border-t-[5px] border-t-[#d8d8d8]" />
                </div>
            </div>
            <MainToolbar />
            {/* ribbon tabs */}
            <div className="h-[20px] shrink-0 border-t border-[#5c5c5c] bg-[#505050] flex items-center text-[#a8a8a8] whitespace-nowrap">
                <div className="pl-[22px] flex items-center">
                    {ribbon.map(r => (
                        r === 'Basic Modeling'
                            ? <span key={r} className="-ml-[9px] mr-[12px] h-[19px] px-2 flex items-center bg-[#5f5f5f] border border-[#777] border-b-0 text-[#d8d8d8]">{r}</span>
                            : <span key={r} className="mr-[21px]">{r}</span>
                    ))}
                    <div className="ml-[11px] w-[13px] h-[9px] rounded-sm bg-[#d8d8d8]" />
                    <span className="ml-[5px] w-0 h-0 border-x-[3px] border-x-transparent border-t-[4px] border-t-[#bbb]" />
                </div>
            </div>
            <div className="h-1 shrink-0 bg-[#3e3e3e]" />
            <div className="flex-1 min-h-0 flex">
                {/* left strip */}
                <div className="relative w-[44px] shrink-0 bg-[linear-gradient(to_bottom,#3a3a3a,#2f2f2f)]">
                    <div className="mx-0.5 mt-0.5 h-[2px] w-[20px] border-t-2 border-dotted border-[#909090]" />
                    <div className="absolute left-[10px] bottom-[56px] w-[19px] h-[19px] rounded-[3px] bg-[#4d4d4d] flex items-center justify-center">
                        <span className="w-0 h-0 border-y-[5px] border-y-transparent border-l-[7px] border-l-[#d8d8d8]" />
                    </div>
                    <div className="absolute left-1 right-0 bottom-px h-[44px] rounded-l-[4px] bg-[linear-gradient(to_bottom,#5e6e85_0%,#5e6e85_80%,#3f7ed0_80%)] pt-2 pl-[3px]">
                        <div className="w-[30px] h-[27px] bg-[#5f6770] border-2 border-[#333] rounded-[2px]" />
                    </div>
                </div>
                <Viewport />
                <CommandPanel />
            </div>
            {/* time slider, track bar and status */}
            <div className="h-[112px] shrink-0 flex flex-col bg-[#444]">
                <div className="mt-1.5 ml-2.5 h-4 flex gap-0.5 text-[#c8c8c8] text-[11px]">
                    <div className="w-[14px] bg-[#5a5a5a] rounded-[2px] flex items-center justify-center">&lt;</div>
                    <div className="w-[123px] bg-[#656565] rounded-[3px] flex items-center justify-center">0 / 100</div>
                    <div className="w-[14px] bg-[#5a5a5a] rounded-[2px] flex items-center justify-center">&gt;</div>
                </div>
                <div className="mt-[5px] ml-[9px] w-[2501px] h-[26px] border-t-2 border-[#161616] flex">
                    <div className="w-[50px] shrink-0 flex items-center pl-[14px]">
                        <Ico size={17}><path d="M1 6h4M1 10h4M1 14h4M1 18h4" stroke="#ccc" /><path d="M7 16c3-12 5-12 8-4s5 6 8-2" stroke={T} strokeWidth="1.600" /></Ico>
                    </div>
                    <Timeline />
                </div>
                <StatusArea />
                <div className="h-0.5 shrink-0 bg-[#1b2f4e]" />
            </div>
        </div>
    );
}
